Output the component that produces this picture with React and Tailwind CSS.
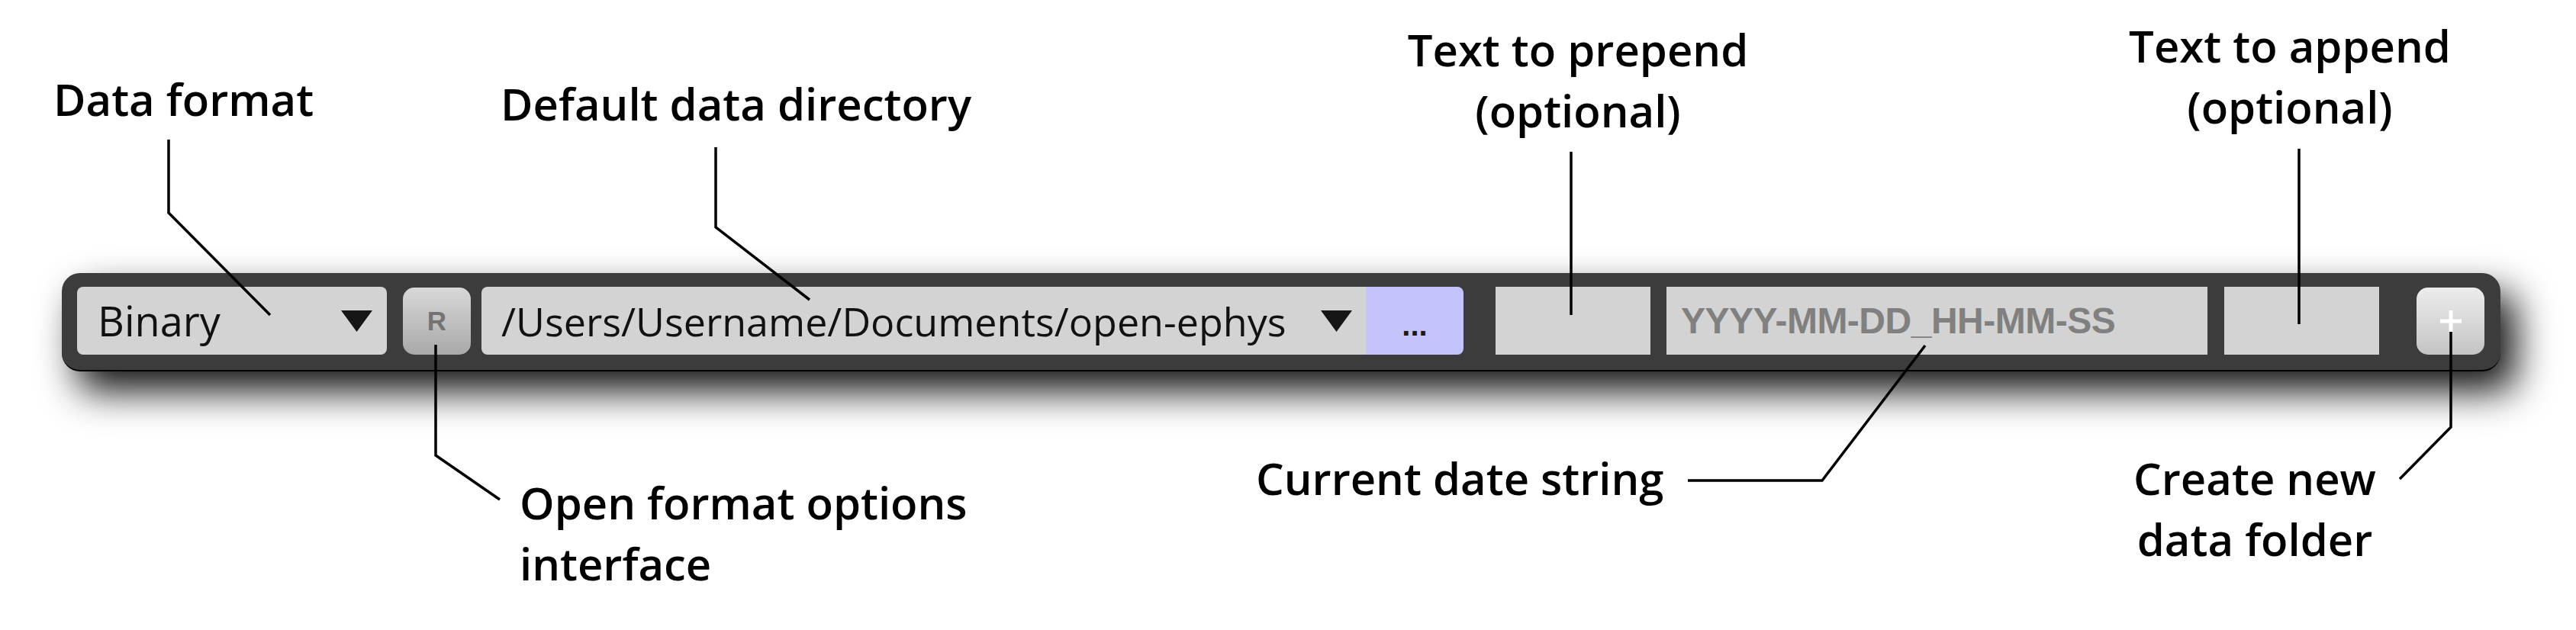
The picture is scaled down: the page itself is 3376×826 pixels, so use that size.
import React from 'react'

const Caret = () => (
  <svg width="41" height="28" viewBox="0 0 41 28" className="shrink-0">
    <polygon points="0,0 41,0 20.5,28" fill="#161616" />
  </svg>
)

const labels = [
  { lines: ['Data format'], className: 'left-[70px] top-[90px]' },
  { lines: ['Default data directory'], className: 'left-[656px] top-[96px]' },
  { lines: ['Text to prepend', '(optional)'], className: 'left-[1768px] top-[25px] w-[600px] text-center' },
  { lines: ['Text to append', '(optional)'], className: 'left-[2701px] top-[20px] w-[600px] text-center' },
  { lines: ['Open format options', 'interface'], className: 'left-[681px] top-[619px]' },
  { lines: ['Current date string'], className: 'left-[1646px] top-[587px]' },
  { lines: ['Create new', 'data folder'], className: 'left-[2655px] top-[587px] w-[600px] text-center' },
]

const leaders = [
  '221,183 221,279 354,413',
  '938,193 938,298 1061,393',
  '2059,199 2059,413',
  '3013,195 3013,425',
  '571,452 571,597 655,655',
  '2523,453 2388,630 2212,630',
  '3212,435 3212,560 3145,628',
]

export default function App() {
  return (
    <div className="relative w-[3376px] h-[826px] overflow-hidden bg-white font-['Open_Sans',sans-serif]">
      <div className="pl-[81px] pt-[358px]">
        {/* Record control bar */}
        <div className="flex items-start w-[3196px] h-[129px] pl-[20px] pr-[21px] pt-[18px] rounded-[24px] bg-[#3c3c3c] border-b-2 border-black shadow-[20px_26px_50px_rgba(0,0,0,0.92)]">
          <div className="flex items-center justify-between w-[406px] h-[89px] pl-[27px] pr-[19px] rounded-[8px] bg-[#d3d3d3] text-[54px] text-[#111]">
            <span>Binary</span>
            <Caret />
          </div>

          <div className="flex items-center justify-center w-[89px] h-[88px] ml-[21px] mt-px rounded-[15px] bg-linear-to-b from-[#d8d8d8] to-[#a9a9a9] font-['Liberation_Sans',sans-serif] font-bold text-[35px] text-[#747474]">
            R
          </div>

          <div className="flex items-center justify-between w-[1159px] h-[89px] ml-[14px] pl-[26px] pr-[18px] rounded-l-[8px] bg-[#d3d3d3] text-[52px] text-[#111]">
            <span>/Users/Username/Documents/open-ephys</span>
            <Caret />
          </div>
          <div className="flex items-center justify-center w-[128px] h-[89px] pt-[10px] rounded-r-[8px] bg-[#c4c4fa] font-['Liberation_Sans',sans-serif] font-bold text-[40px] text-[#1a1a1a]">
            ...
          </div>

          <div className="w-[203px] h-[89px] ml-[42px] bg-[#d3d3d3]" />

          <div className="flex items-center w-[709px] h-[89px] ml-[21px] pl-[19px] bg-[#d3d3d3] font-['Liberation_Sans',sans-serif] font-bold text-[48px] tracking-[-0.5px] text-[#808080]">
            YYYY-MM-DD_HH-MM-SS
          </div>

          <div className="w-[203px] h-[89px] ml-[22px] bg-[#d3d3d3]" />

          <div className="flex items-center justify-center w-[89px] h-[88px] ml-[49px] mt-px rounded-[15px] bg-linear-to-b from-[#ececec] to-[#c4c4c4]">
            <svg width="28" height="28" viewBox="0 0 28 28">
              <rect x="0" y="11.5" width="28" height="5" fill="#fff" />
              <rect x="11.5" y="0" width="5" height="28" fill="#fff" />
            </svg>
          </div>
        </div>
      </div>

      {/* annotation leaders */}
      <svg className="absolute inset-0 pointer-events-none" width="3376" height="826" viewBox="0 0 3376 826">
        {leaders.map((pts) => (
          <polyline key={pts} points={pts} fill="none" stroke="#000" strokeWidth="3.5" strokeLinejoin="miter" />
        ))}
      </svg>

      {labels.map((l) => (
        <div key={l.lines[0]} className={`absolute text-[58px] leading-[80px] font-semibold text-black whitespace-nowrap ${l.className}`}>
          {l.lines.map((t) => (
            <div key={t}>{t}</div>
          ))}
        </div>
      ))}
    </div>
  )
}
